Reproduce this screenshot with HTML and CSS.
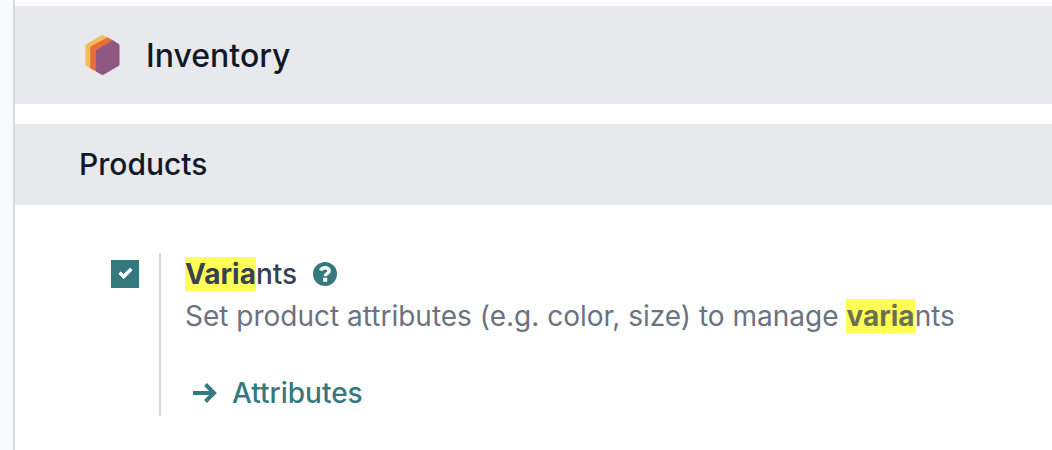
FILE: index.html
```html
<!DOCTYPE html>
<html lang="en">
<head>
  <meta charset="UTF-8">
  <meta name="viewport" content="width=device-width, initial-scale=1.0">
  <title>Settings | Inventory</title>
  <link rel="stylesheet" href="styles.css">
</head>
<body>
  <main class="settings">
    <header class="app-header">
      <svg class="app-icon" viewBox="0 0 102 120" aria-hidden="true">
        <path d="M3 27 48 1Q51 0 54 1L68 9 66 30 20 60V103L3 93Q0 91 0 88V32Q0 29 3 27Z" fill="#f3bd5c"/>
        <path d="M18 33 66 7 84 17 80 40 40 60V114L14 100V40Q14 35 18 33Z" fill="#e86f3b"/>
        <path d="M35 44 82 16 99 26Q102 28 102 31V88Q102 91 99 93L54 119Q51 120 48 119L31 109V51Q31 46 35 44Z" fill="#8f5782"/>
      </svg>
      <h1>Inventory</h1>
    </header>
    <h2 class="block-title">Products</h2>
    <div class="setting">
      <input class="setting-check" type="checkbox" id="variants" checked>
      <div class="setting-body">
        <div class="setting-name">
          <label for="variants"><mark>Varia</mark>nts</label>
          <a class="help" href="#" aria-label="Documentation">
            <svg viewBox="0 0 24 24" aria-hidden="true">
              <circle cx="12" cy="12" r="12" fill="currentColor"/>
              <path d="M7.500 8.600C8.400 6.800 10 5.800 12 5.800c2.400 0 4.200 1.300 4.200 3.100 0 2.600-3.900 2.500-3.900 5.300" fill="none" stroke="#fff" stroke-width="3.400"/>
              <rect x="10.200" y="15.800" width="4" height="4" rx="0.500" fill="#fff"/>
            </svg>
          </a>
        </div>
        <p class="desc">Set product attributes (e.g. color, size) to manage <mark>varia</mark>nts</p>
        <a class="attributes" href="#">
          <svg viewBox="0 0 24 20" aria-hidden="true">
            <path d="M0 10H21M12.500 1.500l8.500 8.500-8.500 8.500" fill="none" stroke="currentColor" stroke-width="4"/>
          </svg>
          Attributes
        </a>
      </div>
    </div>
  </main>
</body>
</html>
```

FILE: styles.css
```css
body { font-family: Inter, Arial, sans-serif; background: #f9fafb; color: #111827; margin: 0; }
.settings { box-sizing: border-box; min-height: 100vh; margin-left: 13px; border-left: 2px solid #d8dadd; background: #fff; padding-top: 6px; }
.app-header { display: flex; align-items: center; gap: 26px; height: 98px; padding-left: 70px; background: #e7e9ed; }
.app-icon { width: 35px; height: 40px; }
h1, h2, p { margin: 0; font-weight: 500; }
h1 { font-size: 32px; }
.block-title { margin-top: 20px; padding-left: 64px; background: #e7e9ed; font-size: 30px; line-height: 81px; }
.setting { display: flex; gap: 20px; padding: 48px 20px 34px 96px; }
.setting-check { appearance: none; flex: none; width: 28px; height: 28px; margin: 7px 0 0; background: #35797e; display: grid; place-content: center; }
.setting-check::before { content: ""; width: 9px; height: 4px; margin-top: -4px; border-left: 4px solid #fff; border-bottom: 4px solid #fff; border-radius: 1px; transform: rotate(-45deg); }
.setting-body { border-left: 2px solid #d8dadd; padding-left: 24px; font-size: 28px; line-height: 42px; }
.setting-name { display: flex; align-items: center; gap: 16px; color: #374151; font-weight: 500; }
.help { display: flex; color: #35797e; }
.help svg { width: 24px; height: 24px; }
mark { background: #ff5; color: inherit; font-weight: 700; }
.desc { color: #6b7280; font-weight: 400; }
.desc mark { color: #6b7250; }
.attributes { display: flex; align-items: center; gap: 15px; margin: 35px 0 2px 8px; color: #35797e; font-weight: 500; text-decoration: none; }
.attributes svg { width: 24px; height: 20px; }
```
